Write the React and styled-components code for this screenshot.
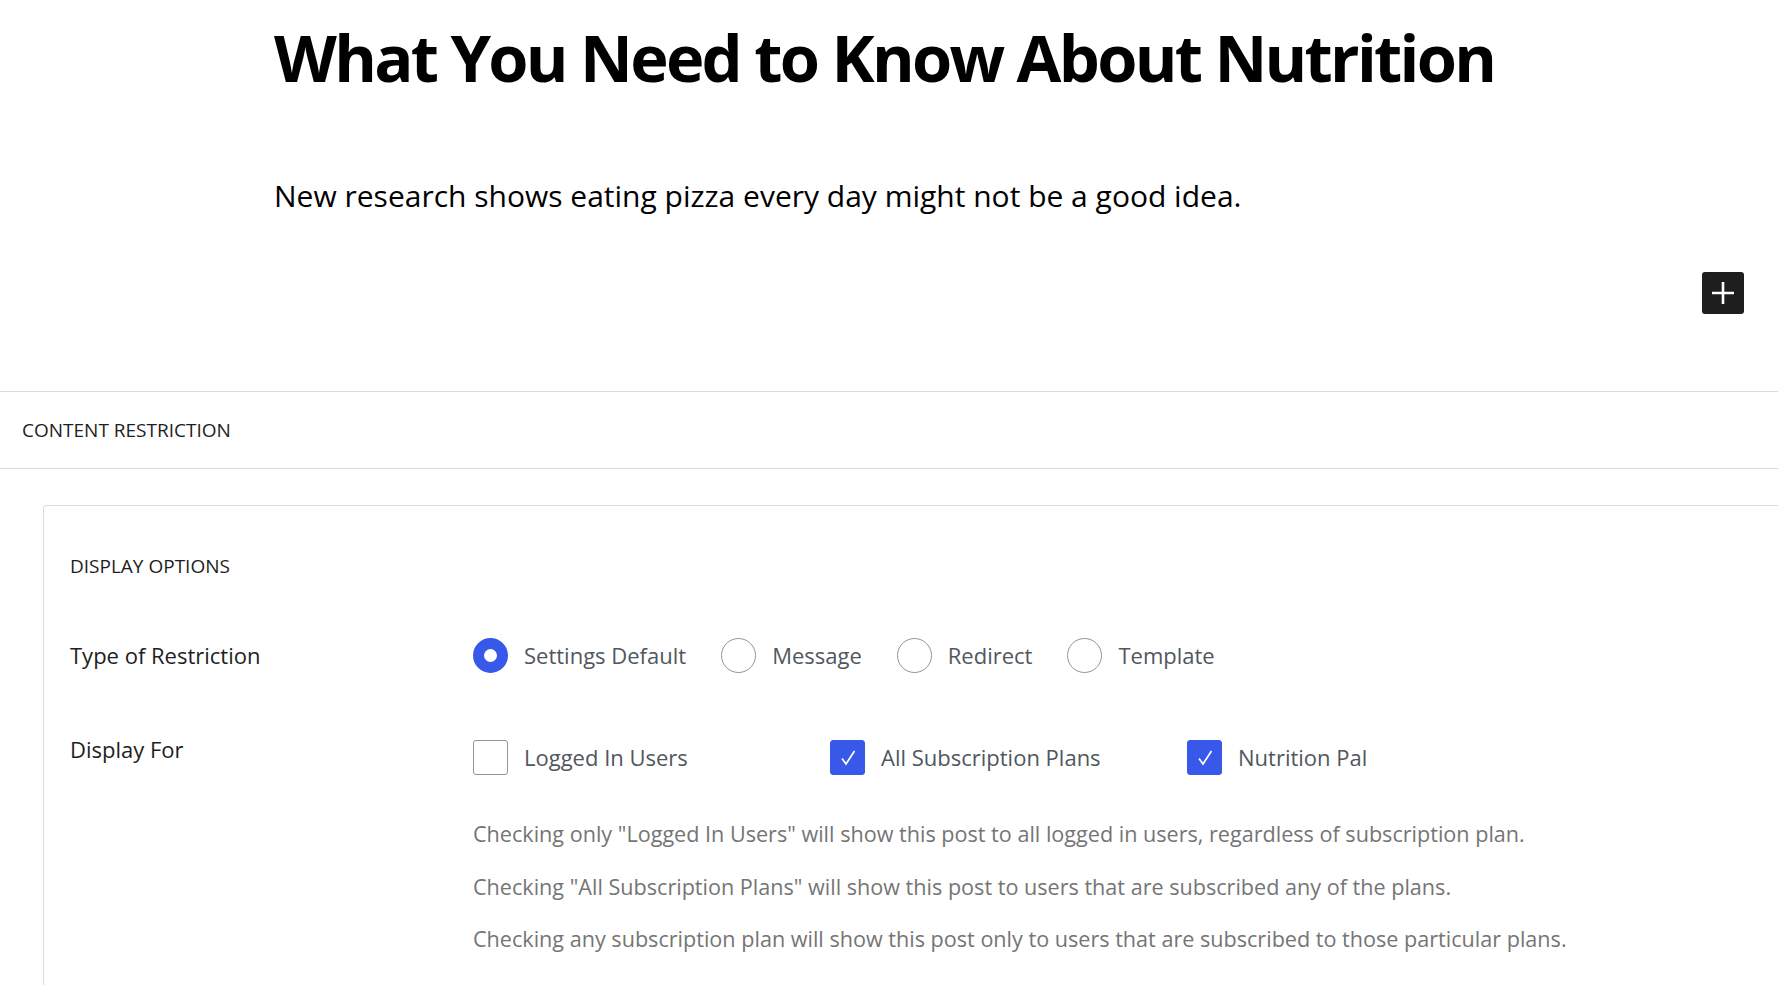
import React from "react";
import styled, { createGlobalStyle } from "styled-components";

const GlobalStyle = createGlobalStyle`
  html, body {
    margin: 0;
    padding: 0;
    background: #fff;
  }
  body {
    font-family: "Open Sans", "Noto Sans", sans-serif;
    color: #1e1e1e;
  }
`;

const Page = styled.div`
  width: 100%;
  min-height: 985px;
  overflow: hidden;
`;

const Post = styled.div`
  padding: 18px 0 0 274px;
`;

const Title = styled.h1`
  margin: 0;
  font-size: 65px;
  line-height: 1.2;
  font-weight: 700;
  color: #000;
  letter-spacing: -2.7px;
`;

const Lead = styled.p`
  margin: 77px 0 0;
  font-size: 30px;
  line-height: 1.5;
  color: #000;
`;

const InserterRow = styled.div`
  display: flex;
  justify-content: flex-end;
  padding: 54px 34px 77px 0;
`;

const PlusButton = styled.button`
  width: 42px;
  height: 42px;
  border: none;
  border-radius: 3px;
  background: #1e1e1e;
  display: flex;
  align-items: center;
  justify-content: center;
  padding: 0;
  cursor: pointer;
`;

const MetaBox = styled.section`
  border-top: 1px solid #dcdcde;
`;

const MetaHeader = styled.div`
  height: 76px;
  display: flex;
  align-items: center;
  padding: 0 22px;
  border-bottom: 1px solid #dcdcde;
  font-size: 19px;
  color: #1e1e1e;
`;

const MetaBody = styled.div`
  padding: 36px 0 0 43px;
`;

const Card = styled.div`
  border: 1px solid #dcdcde;
  border-right: none;
  border-bottom: none;
  border-radius: 4px 0 0 0;
  padding: 48px 0 40px 26px;
  min-height: 480px;
`;

const SectionTitle = styled.h3`
  margin: 0;
  font-size: 19px;
  line-height: 1.33;
  font-weight: 400;
  color: #1e1e1e;
`;

const Field = styled.div`
  display: grid;
  grid-template-columns: 403px 1fr;
  align-items: ${(p) => (p.$top ? "start" : "center")};
  margin-top: ${(p) => p.$gap}px;
`;

const FieldLabel = styled.div`
  font-size: 22px;
  line-height: 1.4;
  font-weight: 500;
  color: #1e1e1e;
  margin-top: ${(p) => (p.$top ? "-6px" : "0")};
`;

const RadioGroup = styled.div`
  display: flex;
  align-items: center;
  gap: 35px;
`;

const Option = styled.label`
  display: flex;
  align-items: center;
  gap: 16px;
  font-size: 22px;
  line-height: 1.4;
  color: #50575e;
  cursor: pointer;
`;

const Radio = styled.span`
  width: 35px;
  height: 35px;
  box-sizing: border-box;
  border-radius: 50%;
  border: ${(p) => (p.$checked ? "11px solid #3858e9" : "1px solid #949494")};
  background: #fff;
  flex-shrink: 0;
`;

const CheckGrid = styled.div`
  display: grid;
  grid-template-columns: repeat(3, 357px);
  align-items: center;
`;

const Box = styled.span`
  width: 35px;
  height: 35px;
  box-sizing: border-box;
  border-radius: 3px;
  border: 1px solid ${(p) => (p.$checked ? "#3858e9" : "#949494")};
  background: ${(p) => (p.$checked ? "#3858e9" : "#fff")};
  display: flex;
  align-items: center;
  justify-content: center;
  flex-shrink: 0;
`;

const Help = styled.p`
  margin: ${(p) => (p.$first ? "43px" : "20px")} 0 0;
  font-size: 21.6px;
  line-height: 1.5;
  color: #757575;
`;

const PlusIcon = () => (
  <svg width="22" height="22" viewBox="0 0 22 22">
    <path d="M11 0v22M0 11h22" stroke="#fff" strokeWidth="2.6" />
  </svg>
);

const CheckIcon = () => (
  <svg width="24" height="24" viewBox="0 0 24 24" fill="none">
    <path d="M6 12.5l4 5.5 8.5-13" stroke="#fff" strokeWidth="1.7" />
  </svg>
);

const restrictionTypes = [
  { label: "Settings Default", checked: true },
  { label: "Message" },
  { label: "Redirect" },
  { label: "Template" },
];

const audiences = [
  { label: "Logged In Users" },
  { label: "All Subscription Plans", checked: true },
  { label: "Nutrition Pal", checked: true },
];

const helpLines = [
  'Checking only "Logged In Users" will show this post to all logged in users, regardless of subscription plan.',
  'Checking "All Subscription Plans" will show this post to users that are subscribed any of the plans.',
  "Checking any subscription plan will show this post only to users that are subscribed to those particular plans.",
];

export default function App() {
  return (
    <Page>
      <GlobalStyle />
      <Post>
        <Title>What You Need to Know About Nutrition</Title>
        <Lead>New research shows eating pizza every day might not be a good idea.</Lead>
      </Post>
      <InserterRow>
        <PlusButton aria-label="Add block">
          <PlusIcon />
        </PlusButton>
      </InserterRow>
      <MetaBox>
        <MetaHeader>CONTENT RESTRICTION</MetaHeader>
        <MetaBody>
          <Card>
            <SectionTitle>DISPLAY OPTIONS</SectionTitle>
            <Field $gap={59}>
              <FieldLabel>Type of Restriction</FieldLabel>
              <RadioGroup>
                {restrictionTypes.map((t) => (
                  <Option key={t.label}>
                    <Radio $checked={t.checked} />
                    {t.label}
                  </Option>
                ))}
              </RadioGroup>
            </Field>
            <Field $gap={67} $top>
              <FieldLabel $top>Display For</FieldLabel>
              <div>
                <CheckGrid>
                  {audiences.map((a) => (
                    <Option key={a.label}>
                      <Box $checked={a.checked}>{a.checked && <CheckIcon />}</Box>
                      {a.label}
                    </Option>
                  ))}
                </CheckGrid>
                {helpLines.map((line, i) => (
                  <Help key={i} $first={i === 0}>
                    {line}
                  </Help>
                ))}
              </div>
            </Field>
          </Card>
        </MetaBody>
      </MetaBox>
    </Page>
  );
}
